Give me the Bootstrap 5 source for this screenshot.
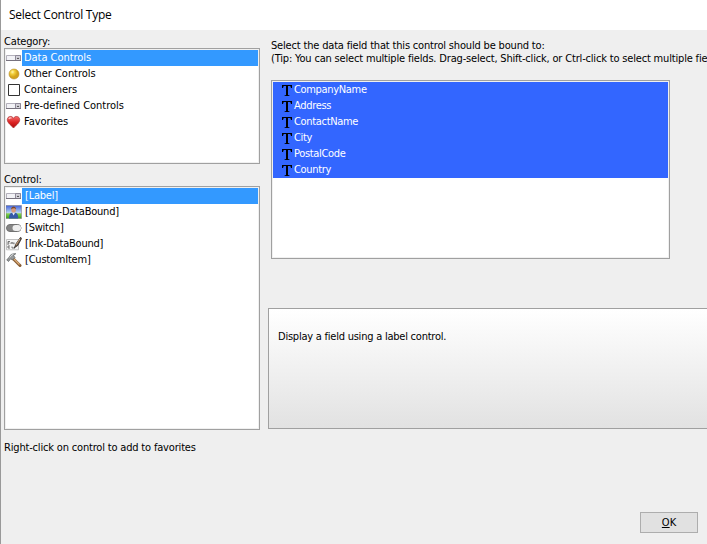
<!DOCTYPE html>
<html lang="en">
<head>
<meta charset="utf-8">
<meta name="viewport" content="width=device-width, initial-scale=1">
<title>Select Control Type</title>
<link href="https://cdn.jsdelivr.net/npm/bootstrap@5.3.0/dist/css/bootstrap.min.css" rel="stylesheet">
<style>
body{font-family:"DejaVu Sans Condensed","DejaVu Sans",sans-serif;font-stretch:condensed;font-size:11px;line-height:16px;letter-spacing:-.175px;color:#000;background:#efefef}
.dialog{width:707px;height:544px;border-left:1px solid #999;white-space:nowrap}
.titlebar{height:30px;padding-left:8px;font:12px/30px "Open Sans","Noto Sans",sans-serif;letter-spacing:-.27px}
.left-pane{width:256px;margin-left:3px;padding-top:3px}
.right-pane{margin-left:8px;padding-top:9px}
.caption{height:15px;line-height:17px}
.listbox{border:1px solid #a0a0a0;padding:1px;background:#fff;box-shadow:inset 0 0 0 1px #f0f0f0;border-radius:0}
.categories{height:116px;margin-bottom:7px;letter-spacing:-.04px}
.controls{height:244px;margin-bottom:10px;letter-spacing:-.22px}
.entry{height:16px;padding:0;border:0;background:none;color:#000;border-radius:0}
.entry svg{width:16px;height:16px;flex:none}
.entry span{padding-left:2px;line-height:15px;height:16px;flex:1}
.controls .entry span{padding-left:3px}
.entry.chosen span{background:#3399ff;color:#fff}
.intro{line-height:13px;height:41px;margin-left:3px}
.fields{width:399px;height:179px;margin:0 0 49px 3px;letter-spacing:-.33px}
.fields .entry{background:#3366ff;color:#fff;padding-left:8px}
.fields .entry svg{width:12px}
.fields .entry span{padding-left:1px}
.details{height:121px;border:1px solid #a0a0a0;border-right:0;padding:20px 9px 18px;letter-spacing:-.23px;background:linear-gradient(#fff,#e2e2e2)}
.ok-btn{width:58px;height:21px;margin:83px 9px 0 0;border:1px solid #adadad;border-radius:0;background:#e1e1e1;padding:0;font-size:11px;line-height:18px;color:#000}
</style>
</head>
<body>
<svg class="position-absolute" width="0" height="0" aria-hidden="true" xmlns="http://www.w3.org/2000/svg">
<defs>
<radialGradient id="gold" cx=".35" cy=".3"><stop stop-color="#fff6b0"/><stop offset=".45" stop-color="#f2cf3a"/><stop offset="1" stop-color="#d3a21c"/></radialGradient>
<linearGradient id="red" x2="0" y2="1"><stop stop-color="#f56a6a"/><stop offset=".5" stop-color="#dd2424"/><stop offset="1" stop-color="#ae0808"/></linearGradient>
<linearGradient id="sky" x2="0" y2="1"><stop stop-color="#3f62dc"/><stop offset=".6" stop-color="#c5dcf4"/><stop offset=".62" stop-color="#8ad455"/><stop offset="1" stop-color="#36a018"/></linearGradient>
<symbol id="field" viewBox="0 0 16 16"><path d="M.5 5.500h14v5H.5z" fill="#f2f2f6" stroke="#b3b0bb"/><path d="M9.500 5.500h5v5h-5z" fill="#d4d2da" stroke="#8f8a99"/><path d="M10.800 9l1.200-1.600L13.200 9z" fill="#333"/><path d="M0 10.500h15" stroke="#77727e"/></symbol>
<symbol id="letter-t" viewBox="0 0 12 16"><path d="M1 3h10v3h-1L9.300 4H7v9l1.500.4v.6h-5v-.6L5 13V4H2.700L2 6H1z" fill="#000"/></symbol>
</defs>
</svg>
<div class="dialog d-flex flex-column overflow-hidden">
<header class="titlebar bg-white">Select Control Type</header>
<main class="d-flex flex-grow-1">
<section class="left-pane flex-shrink-0">
<div class="caption">Category:</div>
<div class="listbox categories list-group">
<div class="entry chosen list-group-item d-flex"><svg><use href="#field"/></svg><span>Data Controls</span></div>
<div class="entry list-group-item d-flex"><svg viewBox="0 0 16 16"><circle cx="8" cy="8" r="5" fill="url(#gold)" stroke="#b58d2a" stroke-width=".6"/></svg><span>Other Controls</span></div>
<div class="entry list-group-item d-flex"><svg viewBox="0 0 16 16"><path d="M2.500 2.500h11v11h-11z" fill="#fff" stroke="#333"/></svg><span>Containers</span></div>
<div class="entry list-group-item d-flex"><svg><use href="#field"/></svg><span>Pre-defined Controls</span></div>
<div class="entry list-group-item d-flex"><svg viewBox="0 0 16 16"><path d="M7.500 14C5.500 11.500 1.300 9 1.300 5.700c0-3.700 4.700-4.400 6.200-1.400 1.500-3 6.200-2.300 6.200 1.400C13.700 9 9.500 11.500 7.500 14z" fill="url(#red)" stroke="#a93434" stroke-width=".7"/><path d="M3 5.200c.2-1.400 1.500-1.700 2.500-1" fill="none" stroke="#ffc9c9" stroke-width="1.200"/></svg><span>Favorites</span></div>
</div>
<div class="caption">Control:</div>
<div class="listbox controls list-group">
<div class="entry chosen list-group-item d-flex"><svg><use href="#field"/></svg><span>[Label]</span></div>
<div class="entry list-group-item d-flex"><svg viewBox="0 0 16 16"><path d="M0 1.500h15.500v13H0z" fill="url(#sky)" stroke="#777" stroke-width=".5"/><path d="M3 14.500c0-4 1-5.500 3-5.800h3.200c2 .3 3 1.800 3 5.800z" fill="#3558a8"/><path d="M6 8.500h3.200l-1.600 3z" fill="#e5edff"/><ellipse cx="7.600" cy="5.700" rx="2.300" ry="2.900" fill="#d99b79"/><path d="M5.200 5.500C4.900 1.500 10.300 1.500 10 5.500 9 3.800 6.500 3.800 5.200 5.500z" fill="#75452f"/></svg><span>[Image-DataBound]</span></div>
<div class="entry list-group-item d-flex"><svg viewBox="0 0 16 16"><rect x=".5" y="4.500" width="14.500" height="7" rx="3.500" fill="#858585" stroke="#727272"/><rect x="6.500" y="5" width="8.500" height="6" rx="3" fill="#eee"/></svg><span>[Switch]</span></div>
<div class="entry list-group-item d-flex"><svg viewBox="0 0 16 16"><path d="M.5 3.500h12v10.300H.5z" fill="#f5f5f5" stroke="#c2c2c2"/><path d="M2 9V5.500h2M2 7h1.500M5 8V6.500l1 .7 1-.7V8M8 6.500v1.800M2 12v-2h2M2 12h2M6 10.500v1.500h3" fill="none" stroke="#555" stroke-width=".8"/><path d="M14.600 1.200L10 7.800 8.200 12l3.600-2.500 3.800-7z" fill="#665346" stroke="#292522" stroke-width=".7"/><path d="M13.800 3L10 9" stroke="#caa77f"/></svg><span>[Ink-DataBound]</span></div>
<div class="entry list-group-item d-flex"><svg viewBox="0 0 16 16"><path d="M7 6.500l7 7" stroke="#895e35" stroke-width="3" stroke-linecap="round"/><path d="M7.500 6.500l6 6" stroke="#dcac78" stroke-width="1.200"/><path d="M.7 7.800L3 5.500C4 2.800 6.300 1.300 9.800 1.700L7.500 3.500 9 5.500 6.500 8 4.700 6.800 2.500 9.500z" fill="#96999a" stroke="#575b5d" stroke-width=".7"/><path d="M3.800 5.300c1-1.600 2-2.500 3.500-2.800" fill="none" stroke="#e8eaec"/></svg><span>[CustomItem]</span></div>
</div>
<div>Right-click on control to add to favorites</div>
</section>
<section class="right-pane d-flex flex-column flex-grow-1 overflow-hidden">
<div class="intro flex-shrink-0">Select the data field that this control should be bound to:<br>(Tip: You can select multiple fields. Drag-select, Shift-click, or Ctrl-click to select multiple fields.)</div>
<div class="listbox fields list-group flex-shrink-0">
<div class="entry list-group-item d-flex"><svg><use href="#letter-t"/></svg><span>CompanyName</span></div>
<div class="entry list-group-item d-flex"><svg><use href="#letter-t"/></svg><span>Address</span></div>
<div class="entry list-group-item d-flex"><svg><use href="#letter-t"/></svg><span>ContactName</span></div>
<div class="entry list-group-item d-flex"><svg><use href="#letter-t"/></svg><span>City</span></div>
<div class="entry list-group-item d-flex"><svg><use href="#letter-t"/></svg><span>PostalCode</span></div>
<div class="entry list-group-item d-flex"><svg><use href="#letter-t"/></svg><span>Country</span></div>
</div>
<div class="details flex-shrink-0">Display a field using a label control.</div>
<button class="btn ok-btn align-self-end flex-shrink-0" type="button"><u>O</u>K</button>
</section>
</main>
</div>
<script src="https://cdn.jsdelivr.net/npm/bootstrap@5.3.0/dist/js/bootstrap.bundle.min.js"></script>
</body>
</html>
